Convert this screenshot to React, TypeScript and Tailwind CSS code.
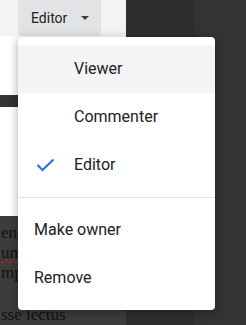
import React from "react";

const roles = [
  { label: "Viewer", active: false, hover: true },
  { label: "Commenter", active: false, hover: false },
  { label: "Editor", active: true, hover: false },
];

const extras = ["Make owner", "Remove"];

function CheckIcon() {
  return (
    <svg width="19" height="14" viewBox="0 0 19 14" fill="none">
      <path d="M1.5 7 L6.5 12 L17.5 1.5" stroke="#1a73e8" strokeWidth="2" />
    </svg>
  );
}

export default function App() {
  return (
    <div
      className="relative w-[246px] h-[325px] overflow-hidden flex bg-[#303030]"
      style={{ fontFamily: "Roboto, 'Noto Sans', sans-serif" }}
    >
      {/* page behind the menu */}
      <div className="w-[126px] flex flex-col">
        <div className="h-[37px] bg-[#f1f3f4] flex items-start pl-[18px]">
          <button className="h-[36px] w-[83px] rounded-b-[4px] bg-[#e2e3e4] flex items-center pl-[13px] text-[14px] text-[#202124]">
            Editor
            <span className="ml-[14px] w-0 h-0 border-l-[4px] border-r-[4px] border-t-[4px] border-l-transparent border-r-transparent border-t-[#3c4043]" />
          </button>
        </div>
        <div className="h-[66px] bg-white" />
        <div className="h-[14px] bg-[#333]" />
        <div className="h-[123px] bg-white" />
        <div
          className="flex-1 bg-[#3c3c3c] text-[#111] text-[17px] leading-[20px] pt-[7px] pl-px"
          style={{ fontFamily: "'Liberation Serif', serif" }}
        >
          <div>ens</div>
          <div className="underline decoration-wavy decoration-[#c5221f] decoration-1">um</div>
          <div>mpo</div>
          <div className="mt-[22px]">sse lectus</div>
        </div>
      </div>
      <div className="w-[69px] bg-[#2e2e2e]" />
      <div className="flex-1 bg-[#333333]" />

      {/* dropdown menu */}
      <div className="absolute left-[18px] top-[37px] w-[197px] rounded-[4px] bg-white py-[8px] shadow-[0_2px_10px_rgba(0,0,0,0.35)] text-[16px] text-[#202124]">
        {roles.map((r) => (
          <div
            key={r.label}
            className={`h-[48px] flex items-center ${r.hover ? "bg-[#f4f4f4]" : ""}`}
          >
            <div className="w-[56px] flex items-center pl-[18px]">
              {r.active && <CheckIcon />}
            </div>
            <span>{r.label}</span>
          </div>
        ))}
        <div className="my-[8px] h-px bg-[#e0e0e0]" />
        {extras.map((t) => (
          <div key={t} className="h-[48px] flex items-center pl-[16px]">
            {t}
          </div>
        ))}
      </div>
    </div>
  );
}
